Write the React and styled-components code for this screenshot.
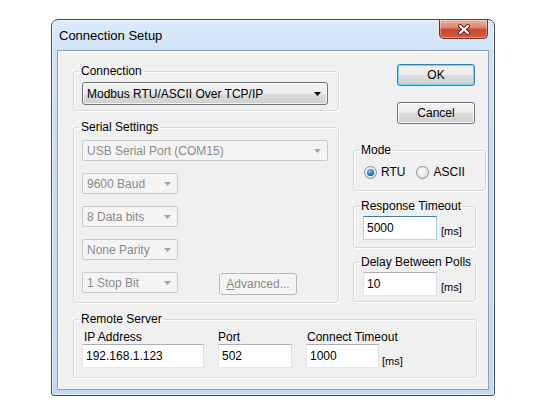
import React from 'react';
import styled, { createGlobalStyle } from 'styled-components';

const GlobalStyle = createGlobalStyle`
  html, body { margin: 0; padding: 0; background: #fff; }
  body {
    font-family: "Liberation Sans", Arial, sans-serif;
    font-size: 12px;
    color: #000;
  }
  *, *::before, *::after { box-sizing: border-box; }
`;

const Page = styled.div`
  width: 550px;
  height: 416px;
  padding: 19px 0 0 51px;
  background: #fff;
`;

const Window = styled.div`
  width: 444px;
  height: 377px;
  display: flex;
  flex-direction: column;
  border: 1px solid #3f4d5d;
  border-radius: 7px 7px 3px 3px;
  background: linear-gradient(180deg, #dcebfa 0%, #cde1f5 10%, #c2d9f1 100%);
  box-shadow: inset 0 0 0 1px rgba(255, 255, 255, 0.55);
  padding: 0 5px 5px;
`;

const TitleBar = styled.div`
  height: 30px;
  flex: none;
  display: flex;
  align-items: flex-start;
  justify-content: space-between;
  padding-left: 2px;
`;

const Title = styled.div`
  align-self: center;
  font-family: "Liberation Sans", Arial, sans-serif;
  font-size: 13px;
  color: #000;
  margin-top: 1px;
`;

const CloseButton = styled.div`
  width: 49px;
  height: 19px;
  margin-right: 1px;
  border: 1px solid #7e2b22;
  border-top: none;
  border-radius: 0 0 5px 5px;
  background: linear-gradient(180deg, #eab2a4 0%, #dc8a76 40%, #c7462f 55%, #d2603f 100%);
  box-shadow: inset 0 0 0 1px rgba(255, 255, 255, 0.35);
  display: flex;
  align-items: center;
  justify-content: center;
`;

const Client = styled.div`
  flex: 1;
  background: #f0f0f0;
  border: 1px solid #8aa0b8;
  box-shadow: inset 1px 1px 0 #fafafa;
  padding: 13px 0 0 15px;
  display: grid;
  grid-template-columns: 266px 133px;
  column-gap: 14px;
  align-content: start;
`;

const Column = styled.div`
  display: flex;
  flex-direction: column;
  align-items: flex-start;
`;

const Group = styled.fieldset`
  margin: ${p => p.$mt || 0}px 0 0 0;
  padding: 0;
  min-width: 0;
  width: ${p => p.$w}px;
  border: 1px solid #d5d9de;
  border-radius: 3px;
  box-shadow: inset 1px 1px 0 #fff, 1px 1px 0 #fff;
`;

const Legend = styled.legend`
  margin-left: 5px;
  padding: 0 2px;
  font-size: 12px;
  line-height: 14px;
  color: #000;
`;

const GroupBody = styled.div`
  padding: ${p => p.$pad};
  display: flex;
  flex-direction: ${p => p.$dir || 'column'};
  align-items: flex-start;
  gap: ${p => p.$gap || 0}px;
`;

const Combo = styled.div`
  width: ${p => p.$w}px;
  height: ${p => p.$h || 21}px;
  display: flex;
  align-items: center;
  justify-content: space-between;
  padding: 0 6px 0 4px;
  border: 1px solid ${p => (p.$disabled ? '#c8cbce' : '#707070')};
  border-radius: ${p => (p.$disabled ? 2 : 3)}px;
  background: ${p =>
    p.$disabled
      ? '#f4f4f4'
      : 'linear-gradient(180deg, #f2f2f2 0%, #ebebeb 50%, #dddddd 51%, #cfcfcf 100%)'};
  box-shadow: ${p => (p.$disabled ? 'none' : 'inset 0 0 0 1px rgba(255,255,255,0.7)')};
  color: ${p => (p.$disabled ? '#8b8b8b' : '#000')};
  font-size: 12px;
  white-space: nowrap;
`;

const Row = styled.div`
  display: flex;
  align-items: ${p => p.$align || 'center'};
  gap: ${p => p.$gap || 0}px;
`;

const PushButton = styled.div`
  width: ${p => p.$w || 78}px;
  height: ${p => p.$h || 22}px;
  margin: ${p => p.$m || '0'};
  display: flex;
  align-items: center;
  justify-content: center;
  border-radius: 3px;
  font-size: 12px;
  border: 1px solid ${p => (p.$default ? '#3c7fb1' : p.$disabled ? '#b5b8bb' : '#707070')};
  background: ${p =>
    p.$disabled
      ? '#f4f4f4'
      : 'linear-gradient(180deg, #f2f2f2 0%, #ebebeb 50%, #dddddd 51%, #cfcfcf 100%)'};
  box-shadow: ${p =>
    p.$default
      ? 'inset 0 0 0 1px #6fd3fa'
      : p.$disabled
      ? 'none'
      : 'inset 0 0 0 1px rgba(255,255,255,0.8)'};
  color: ${p => (p.$disabled ? '#8b8b8b' : '#000')};
`;

const Mnemonic = styled.span`
  text-decoration: underline;
`;

const RadioOption = styled.div`
  display: flex;
  align-items: center;
  gap: 4px;
  height: 16px;
  font-size: 12px;
`;

const RadioCircle = styled.span`
  width: 13px;
  height: 13px;
  border-radius: 50%;
  border: 1px solid #8e8f8f;
  background: radial-gradient(circle at 40% 35%, #fdfdfd 0%, #e6e6e6 60%, #cfcfcf 100%);
  display: flex;
  align-items: center;
  justify-content: center;
  flex: none;
`;

const RadioDot = styled.span`
  width: 7px;
  height: 7px;
  border-radius: 50%;
  background: radial-gradient(circle at 40% 35%, #8fd0f7 0%, #2a7fc6 45%, #0f3f7d 100%);
`;

const TextBox = styled.div`
  width: ${p => p.$w}px;
  height: ${p => p.$h || 24}px;
  background: #fff;
  border: 1px solid;
  border-color: ${p =>
    p.$focused ? '#3d7bad #a4c9e3 #b7d9ed #b5cfe7' : '#abadb3 #dbdfe6 #e3e9ef #e2e3ea'};
  padding: 3px 3px 0;
  font-size: 12px;
  line-height: 16px;
  color: #000;
`;

const Unit = styled.span`
  font-size: 11px;
  line-height: 13px;
  margin-left: ${p => p.$ml || 4}px;
  margin-bottom: ${p => p.$mb || 0}px;
  color: #000;
`;

const Field = styled.div`
  width: ${p => p.$w}px;
  display: flex;
  flex-direction: column;
`;

const FieldLabel = styled.div`
  font-size: 12px;
  line-height: 14px;
  white-space: nowrap;
  padding-left: ${p => p.$pl || 0}px;
`;

const RemoteGroup = styled(Group)`
  grid-column: 1 / -1;
`;

const Arrow = ({ color }) => (
  <svg width="7" height="4" viewBox="0 0 7 4">
    <polygon points="0,0 7,0 3.5,4" fill={color} />
  </svg>
);

const Radio = ({ checked, label }) => (
  <RadioOption>
    <RadioCircle>{checked && <RadioDot />}</RadioCircle>
    <span>{label}</span>
  </RadioOption>
);

const CloseGlyph = () => (
  <svg width="14" height="11" viewBox="0 0 14 11">
    <path d="M3 2 L11 9 M11 2 L3 9" stroke="#5b1c14" strokeWidth="4" strokeLinecap="round" />
    <path d="M3 2 L11 9 M11 2 L3 9" stroke="#fff" strokeWidth="2.2" strokeLinecap="round" />
  </svg>
);

const serialCombos = ['9600 Baud', '8 Data bits', 'None Parity'];

export default function App() {
  return (
    <>
      <GlobalStyle />
      <Page>
        <Window>
          <TitleBar>
            <Title>Connection Setup</Title>
            <CloseButton>
              <CloseGlyph />
            </CloseButton>
          </TitleBar>
          <Client>
            <Column>
              <Group $w={266}>
                <Legend>Connection</Legend>
                <GroupBody $pad="4px 9px 5px 8px">
                  <Combo $w={246} $h={23}>
                    <span>Modbus RTU/ASCII Over TCP/IP</span>
                    <Arrow color="#000" />
                  </Combo>
                </GroupBody>
              </Group>
              <Group $w={266} $mt={9}>
                <Legend>Serial Settings</Legend>
                <GroupBody $pad="6px 9px 7px 8px" $gap={12}>
                  <Combo $w={246} $disabled>
                    <span>USB Serial Port (COM15)</span>
                    <Arrow color="#a6a6a6" />
                  </Combo>
                  {serialCombos.map(t => (
                    <Combo key={t} $w={96} $disabled>
                      <span>{t}</span>
                      <Arrow color="#a6a6a6" />
                    </Combo>
                  ))}
                  <Row $align="flex-start" $gap={41}>
                    <Combo $w={96} $disabled>
                      <span>1 Stop Bit</span>
                      <Arrow color="#a6a6a6" />
                    </Combo>
                    <PushButton $disabled $h={22} $m="1px 0 0 0">
                      <span>
                        <Mnemonic>A</Mnemonic>dvanced...
                      </span>
                    </PushButton>
                  </Row>
                </GroupBody>
              </Group>
            </Column>
            <Column>
              <PushButton $default $m="0 0 0 44px">OK</PushButton>
              <PushButton $m="16px 0 0 44px">Cancel</PushButton>
              <Group $w={133} $mt={19}>
                <Legend>Mode</Legend>
                <GroupBody $pad="7px 0 10px 10px" $dir="row" $gap={11}>
                  <Radio checked label="RTU" />
                  <Radio label="ASCII" />
                </GroupBody>
              </Group>
              <Group $w={123} $mt={8}>
                <Legend>Response Timeout</Legend>
                <GroupBody $pad="3px 0 7px 9px" $dir="row">
                  <Row $align="flex-end">
                    <TextBox $w={74} $focused>5000</TextBox>
                    <Unit $mb={2}>[ms]</Unit>
                  </Row>
                </GroupBody>
              </Group>
              <Group $w={123} $mt={7}>
                <Legend>Delay Between Polls</Legend>
                <GroupBody $pad="3px 0 5px 9px" $dir="row">
                  <Row $align="flex-end">
                    <TextBox $w={74}>10</TextBox>
                    <Unit $mb={2}>[ms]</Unit>
                  </Row>
                </GroupBody>
              </Group>
            </Column>
            <RemoteGroup $w={404} $mt={9}>
              <Legend>Remote Server</Legend>
              <GroupBody $pad="4px 0 9px 8px" $dir="row" $gap={14}>
                <Field $w={122}>
                  <FieldLabel $pl={2}>IP Address</FieldLabel>
                  <TextBox $w={122}>192.168.1.123</TextBox>
                </Field>
                <Field $w={74}>
                  <FieldLabel>Port</FieldLabel>
                  <TextBox $w={74}>502</TextBox>
                </Field>
                <Row $align="flex-end">
                  <Field $w={73}>
                    <FieldLabel $pl={1}>Connect Timeout</FieldLabel>
                    <TextBox $w={73}>1000</TextBox>
                  </Field>
                  <Unit $ml={3} $mb={0}>[ms]</Unit>
                </Row>
              </GroupBody>
            </RemoteGroup>
          </Client>
        </Window>
      </Page>
    </>
  );
}
